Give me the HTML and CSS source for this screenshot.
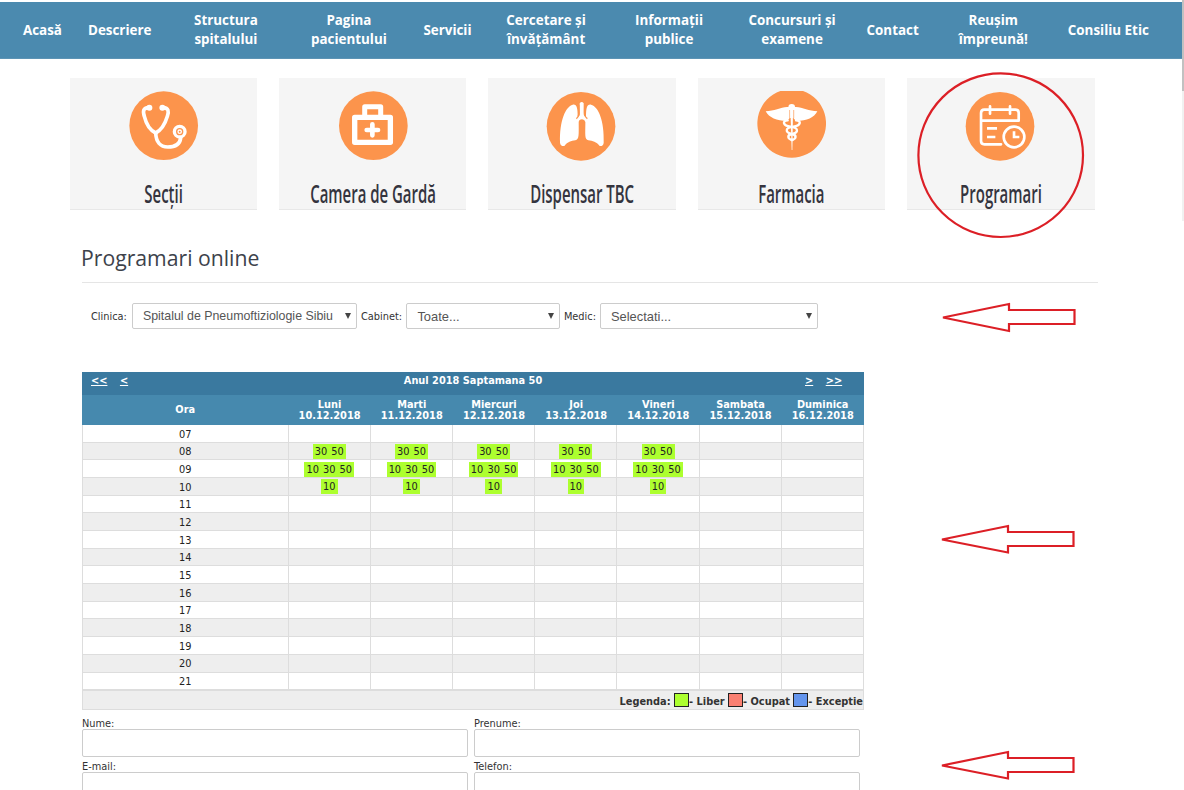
FILE: index.html
```html
<!DOCTYPE html>
<html lang="ro">
<head>
    <meta charset="UTF-8">
    <meta name="viewport" content="width=device-width, initial-scale=1.0">
    <title>Programari online</title>
    <link rel="stylesheet" href="styles.css">
</head>
<body>
    <div class="scrollbar"><div class="thumb"></div></div>
    <nav class="menu">
        <a>Acasă</a>
        <a>Descriere</a>
        <a class="wide">Structura<br>spitalului</a>
        <a class="wide">Pagina<br>pacientului</a>
        <a>Servicii</a>
        <a class="wide">Cercetare şi<br>învăţământ</a>
        <a class="wide">Informaţii<br>publice</a>
        <a class="wide">Concursuri şi<br>examene</a>
        <a>Contact</a>
        <a class="wide">Reușim<br>împreună!</a>
        <a>Consiliu Etic</a>
    </nav>

    <div class="cards">
        <div class="card">
            <svg viewBox="29 22 562 255">
                <circle class="disc" cx="310" cy="165" r="103"/>
                <g class="line">
                    <path d="M265 111C248 112 247 121 252 137C257 158 268 178 286 187C304 178 315 157 321 137C326 121 325 112 308 111" stroke-width="11"/>
                    <path d="M286 187C287 214 300 229 322 229C345 229 359 219 361 202" stroke-width="11"/>
                    <circle cx="358" cy="183" r="16" stroke-width="10"/>
                    <circle cx="358" cy="183" r="5" stroke-width="4"/>
                </g>
                <circle class="fill" cx="267" cy="111" r="9"/>
                <circle class="fill" cx="306" cy="111" r="9"/>
            </svg>
            <h3><span>Secții</span></h3>
        </div>
        <div class="card">
            <svg viewBox="658 22 562 255">
                <circle class="disc" cx="941" cy="165" r="103"/>
                <g class="line">
                    <rect x="885" y="140" width="107" height="75" stroke-width="16"/>
                    <path d="M915 134V108H963V134" stroke-width="15"/>
                    <path d="M938 161V194M921 178H955" stroke-width="14"/>
                </g>
            </svg>
            <h3><span>Camera de Gardă</span></h3>
        </div>
        <div class="card">
            <svg viewBox="25 22 562 255">
                <circle class="disc" cx="304" cy="167" r="103"/>
                <path class="fill" d="M279 102C292 100 294 114 294 138C303 138 300 132 300 98Q306 90 312 98C312 132 310 138 319 138C319 114 321 100 334 102C357 108 374 151 372 216Q371 227 360 226C350 213 339 211 326 209C314 207 317 190 317 154Q315 146 307 146Q298 146 297 154C297 190 299 207 287 209C274 211 264 213 254 226Q242 227 241 216C239 151 257 108 279 102Z"/>
                <path d="M297 103V132Q296 140 290 144M315 103V132Q317 140 323 144" fill="none" stroke="#fc944c" stroke-width="4"/>
            </svg>
            <h3><span>Dispensar TBC</span></h3>
        </div>
        <div class="card">
            <svg viewBox="654 22 562 255">
                <path class="disc" d="M901 61H969A103 103 0 1 1 901 61Z"/>
                <path class="fill" d="M857 122C882 121 902 110 921 109L948 109C968 110 987 121 1012 122C1002 141 982 151 948 151L940 142H929L921 151C890 151 867 141 857 122Z"/>
                <circle class="fill" cx="935" cy="110" r="10"/>
                <path d="M929 118V143M941 118V143" stroke="#fc944c" stroke-width="2"/>
                <path class="fill" d="M931 115H939L937 238H935Z"/>
                <g class="line" stroke-width="7">
                    <path d="M923 149C905 150 909 165 931 168C956 171 957 185 936 190C920 193 922 205 937 208"/>
                    <path d="M948 149C966 150 962 165 940 168C914 171 915 185 935 190C952 193 949 205 935 208"/>
                </g>
            </svg>
            <h3><span>Farmacia</span></h3>
        </div>
        <div class="card">
            <svg viewBox="322 232 562 255">
                <circle class="disc" cx="601" cy="377" r="103"/>
                <g class="line" stroke-width="8">
                    <path d="M604 431H554Q544 431 544 421V337Q544 327 554 327H647Q657 327 657 337V360H544"/>
                    <path d="M571 317V339M631 317V339"/>
                    <path d="M562 383H592M562 409H587" stroke-linecap="butt" stroke-width="8"/>
                    <circle cx="643" cy="409" r="31"/>
                    <path d="M643 392V409H659" stroke-width="8" stroke-linejoin="miter" stroke-linecap="butt"/>
                </g>
            </svg>
            <h3><span>Programari</span></h3>
        </div>
    </div>

    <div class="content">
        <h1>Programari online</h1>
        <div class="filters">
            <label>Clinica:</label>
            <div class="select clinica"><span>Spitalul de Pneumoftiziologie Sibiu</span><i></i></div>
            <label>Cabinet:</label>
            <div class="select cabinet"><span>Toate...</span><i></i></div>
            <label>Medic:</label>
            <div class="select medic"><span>Selectati...</span><i></i></div>
        </div>

        <div class="calendar">
            <div class="week">
                <div><a>&lt;&lt;</a><a>&lt;</a></div>
                <b>Anul 2018 Saptamana 50</b>
                <div class="next"><a>&gt;</a><a>&gt;&gt;</a></div>
            </div>
            <div class="row days">
                <div>Ora</div><div>Luni<br>10.12.2018</div><div>Marti<br>11.12.2018</div><div>Miercuri<br>12.12.2018</div><div>Joi<br>13.12.2018</div><div>Vineri<br>14.12.2018</div><div>Sambata<br>15.12.2018</div><div>Duminica<br>16.12.2018</div>
            </div>
            <div class="hours">
                <div class="row"><div>07</div><div></div><div></div><div></div><div></div><div></div><div></div><div></div></div>
                <div class="row"><div>08</div><div><span>30 50</span></div><div><span>30 50</span></div><div><span>30 50</span></div><div><span>30 50</span></div><div><span>30 50</span></div><div></div><div></div></div>
                <div class="row"><div>09</div><div><span>10 30 50</span></div><div><span>10 30 50</span></div><div><span>10 30 50</span></div><div><span>10 30 50</span></div><div><span>10 30 50</span></div><div></div><div></div></div>
                <div class="row"><div>10</div><div><span>10</span></div><div><span>10</span></div><div><span>10</span></div><div><span>10</span></div><div><span>10</span></div><div></div><div></div></div>
                <div class="row"><div>11</div><div></div><div></div><div></div><div></div><div></div><div></div><div></div></div>
                <div class="row"><div>12</div><div></div><div></div><div></div><div></div><div></div><div></div><div></div></div>
                <div class="row"><div>13</div><div></div><div></div><div></div><div></div><div></div><div></div><div></div></div>
                <div class="row"><div>14</div><div></div><div></div><div></div><div></div><div></div><div></div><div></div></div>
                <div class="row"><div>15</div><div></div><div></div><div></div><div></div><div></div><div></div><div></div></div>
                <div class="row"><div>16</div><div></div><div></div><div></div><div></div><div></div><div></div><div></div></div>
                <div class="row"><div>17</div><div></div><div></div><div></div><div></div><div></div><div></div><div></div></div>
                <div class="row"><div>18</div><div></div><div></div><div></div><div></div><div></div><div></div><div></div></div>
                <div class="row"><div>19</div><div></div><div></div><div></div><div></div><div></div><div></div><div></div></div>
                <div class="row"><div>20</div><div></div><div></div><div></div><div></div><div></div><div></div><div></div></div>
                <div class="row"><div>21</div><div></div><div></div><div></div><div></div><div></div><div></div><div></div></div>
            </div>
            <div class="legend">
                Legenda: <i class="liber"></i>- Liber <i class="ocupat"></i>- Ocupat <i class="exceptie"></i>- Exceptie
            </div>
        </div>

        <form class="details">
            <div><label for="nume">Nume:</label><input type="text" id="nume"></div>
            <div><label for="prenume">Prenume:</label><input type="text" id="prenume"></div>
            <div><label for="email">E-mail:</label><input type="text" id="email"></div>
            <div><label for="telefon">Telefon:</label><input type="text" id="telefon"></div>
        </form>
    </div>

    <svg class="marks" viewBox="0 0 1184 790">
        <ellipse cx="1000.7" cy="155.2" rx="82.3" ry="81.8"/>
        <path d="M943 317.5L1009 304V310H1074.5V324H1009V331Z"/>
        <path d="M942 539.5L1008 526V532H1073.5V546H1008V552.5Z"/>
        <path d="M942 765.5L1008 752V758H1073.5V772H1008V778.5Z"/>
    </svg>
</body>
</html>
```
FILE: styles.css
```css
* {
    box-sizing: border-box;
}
body {
    margin: 0;
    padding-top: 2px;
    height: 790px;
    overflow: hidden;
    position: relative;
    background: #fff;
    font-family: "DejaVu Sans", sans-serif;
    font-size: 9.8px;
    color: #333;
}
.menu {
    display: flex;
    align-items: center;
    width: 1181.5px;
    height: 56.5px;
    padding: 1px 0 0 10px;
    background: #4b8aaf;
    border-bottom: 1px solid #5d94b5;
    font: bold 13.4px/19px "Open Sans", sans-serif;
    color: #fff;
    text-align: center;
}
.menu a {
    padding: 0 13px;
    white-space: nowrap;
}
.menu .wide {
    width: 123px;
    padding: 0;
}
.scrollbar {
    position: absolute;
    top: 0;
    right: 0;
    width: 2px;
    height: 221px;
    background: #f1f1f1;
}
.thumb {
    height: 91px;
    background: #c1c1c1;
}
.cards {
    display: flex;
    gap: 22px;
    margin: 19px 0 0 69.6px;
}
.card {
    width: 187.4px;
    height: 132.5px;
    background: #f5f5f5;
    border-bottom: 1px solid #e8e8e8;
    text-align: center;
}
.card svg {
    display: block;
    width: 187.4px;
    height: 85px;
}
.disc {
    fill: #fc944c;
}
.fill {
    fill: #fff;
}
.line {
    fill: none;
    stroke: #fff;
    stroke-linecap: round;
    stroke-linejoin: round;
}
.card h3 {
    margin: 14px 0 0;
    font: 600 24.5px/34px "Open Sans", sans-serif;
    color: #34343e;
    white-space: nowrap;
}
.card h3 span {
    display: inline-block;
    transform: scaleX(0.61);
    margin: 0 -50px;
}
.content {
    margin-left: 82px;
}
h1 {
    width: 1016px;
    height: 73px;
    margin: 0;
    padding-top: 33px;
    border-bottom: 1px solid #e5e5e5;
    font: 400 21.2px/30px "Open Sans", sans-serif;
    text-indent: -1px;
    color: #3d424b;
}
.filters {
    display: flex;
    align-items: center;
    height: 26px;
    margin-top: 20px;
    padding-left: 9px;
}
.select {
    display: flex;
    align-items: center;
    justify-content: space-between;
    height: 26px;
    padding: 0 5px 0 10px;
    border: 1px solid #ccc;
    border-radius: 2px;
    font: 12.4px "Liberation Sans", sans-serif;
    color: #555;
}
.select i {
    border: 3px solid transparent;
    border-top: 6px solid #444;
    border-bottom: 0;
}
.clinica {
    width: 225px;
    margin: 0 4px 0 5px;
}
.cabinet {
    width: 154px;
    margin: 0 3.5px 0 4.3px;
}
.cabinet span, .medic span {
    font-size: 12.9px;
}
.medic {
    width: 218px;
    margin-left: 4px;
}
.calendar {
    width: 782px;
    margin-top: 43.4px;
}
.week {
    display: grid;
    grid-template-columns: 100px 1fr 100px;
    height: 22.5px;
    padding-top: 3px;
    background: #3a799f;
    color: #fff;
    text-align: center;
    line-height: 12px;
    font-weight: bold;
}
.week div {
    display: flex;
    gap: 12.5px;
    padding-left: 9px;
}
.week .next {
    padding-left: 41px;
}
.week a {
    text-decoration: underline;
}
.row {
    display: grid;
    grid-template-columns: 206.5px repeat(7, 82.2px);
    height: 17.7px;
}
.row div {
    display: flex;
    align-items: center;
    justify-content: center;
    border-right: 1px solid #ddd;
    border-bottom: 1px solid #ddd;
}
.days {
    height: 30px;
    background: #4689ae;
    color: #fff;
    font-weight: bold;
    line-height: 11.3px;
    text-align: center;
}
.row.days div {
    border: none;
}
.hours {
    border-left: 1px solid #ddd;
    color: #222;
}
.hours .row {
    grid-template-columns: 205.7px repeat(7, 82.2px);
}
.hours .row div {
    padding-top: 1px;
}
.hours .row div:first-child {
    padding-top: 1.6px;
}
.hours .row:nth-child(even) {
    background: #eee;
}
.hours span {
    height: 15px;
    padding: 0 2px;
    background: #adff2f;
    line-height: 15px;
    word-spacing: 1px;
}
.legend {
    height: 20px;
    border: 1px solid #ddd;
    background: #eee;
    font-size: 9.8px;
    font-weight: bold;
    line-height: 22px;
    text-align: right;
    white-space: nowrap;
}
.legend i {
    display: inline-block;
    width: 15px;
    height: 14px;
    border: 1px solid #222;
    vertical-align: -1.5px;
}
.liber {
    background: #adff2f;
}
.ocupat {
    background: #fa8072;
}
.exceptie {
    background: #6495ed;
}
.details {
    display: grid;
    grid-template-columns: 386px 386px;
    gap: 3px 6px;
    margin-top: 6.5px;
}
.details label {
    display: block;
    height: 12px;
    line-height: 13px;
}
.details input {
    display: block;
    width: 100%;
    height: 28.5px;
    border: 1px solid #ccc;
    border-radius: 2px;
}
.marks {
    position: absolute;
    left: 0;
    top: 0;
    width: 1184px;
    height: 790px;
    fill: none;
    stroke: #dc1f26;
    stroke-width: 2.2;
    pointer-events: none;
}
```
